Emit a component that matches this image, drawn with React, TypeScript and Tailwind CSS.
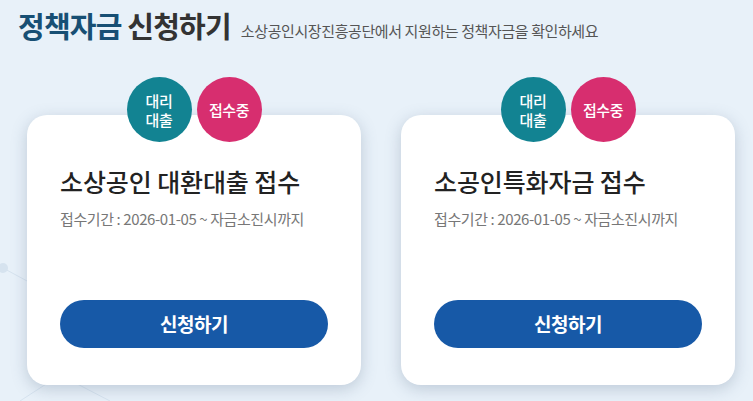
import type { ReactNode } from "react"

type Program = {
  title: string
  period: string
}

const programs: Program[] = [
  { title: "소상공인 대환대출 접수", period: "접수기간 : 2026-01-05 ~ 자금소진시까지" },
  { title: "소공인특화자금 접수", period: "접수기간 : 2026-01-05 ~ 자금소진시까지" },
]

function Badge({ className, children }: { className: string; children: ReactNode }) {
  return (
    <div
      className={`flex h-[65px] w-[65px] flex-col items-center justify-center rounded-full text-center text-[15px] font-medium leading-[19px] tracking-[-0.4px] text-white ${className}`}
    >
      {children}
    </div>
  )
}

function ProgramCard({ title, period }: Program) {
  return (
    <div className="flex w-[334px] flex-col items-center">
      <div className="relative z-10 -mb-[27px] flex gap-[5px]">
        <Badge className="bg-[#128392]">
          <span>대리</span>
          <span>대출</span>
        </Badge>
        <Badge className="bg-[#d72e6f]">
          <span>접수중</span>
        </Badge>
      </div>
      <div className="flex h-[270px] w-full flex-col rounded-[20px] bg-white px-[33px] pb-[37px] pt-[50px] shadow-[0_4px_16px_rgba(80,100,130,0.28)]">
        <h2 className="text-[25px] font-medium leading-[32px] tracking-[-0.1px] text-[#222]">{title}</h2>
        <p className="mt-[12px] text-[15px] leading-[20px] tracking-[-0.4px] text-[#777]">{period}</p>
        <button className="mt-auto h-[48px] w-full rounded-full bg-[#1759a7] text-[19px] font-bold tracking-[-0.5px] text-white">
          신청하기
        </button>
      </div>
    </div>
  )
}

export default function App() {
  return (
    <main
      className="relative h-[401px] w-[753px] overflow-hidden bg-[#e8f1f9]"
      style={{ fontFamily: '"Noto Sans CJK KR", "Noto Sans", sans-serif' }}
    >
      <svg className="absolute left-0 top-[240px]" width="120" height="161" viewBox="0 0 120 161" fill="none">
        <circle cx="3" cy="28" r="5" fill="#d6e3ef" />
        <path d="M3 28 L40 48 M20 161 L60 135 L110 161" stroke="#d6e3ef" strokeWidth="1" />
      </svg>

      <div className="relative">
        <header className="flex items-end gap-[10px] px-[18px] pt-[6px]">
          <h1 className="text-[29px] font-bold leading-[38px] tracking-[-0.8px]">
            <span className="text-[#174f74]">정책자금</span> <span className="text-[#333]">신청하기</span>
          </h1>
          <p className="pb-[3px] text-[15px] leading-[20px] tracking-[-0.4px] text-[#555]">
            소상공인시장진흥공단에서 지원하는 정책자금을 확인하세요
          </p>
        </header>

        <div className="mt-[33px] flex gap-[40px] pl-[27px]">
          {programs.map((p) => (
            <ProgramCard key={p.title} {...p} />
          ))}
        </div>
      </div>
    </main>
  )
}
